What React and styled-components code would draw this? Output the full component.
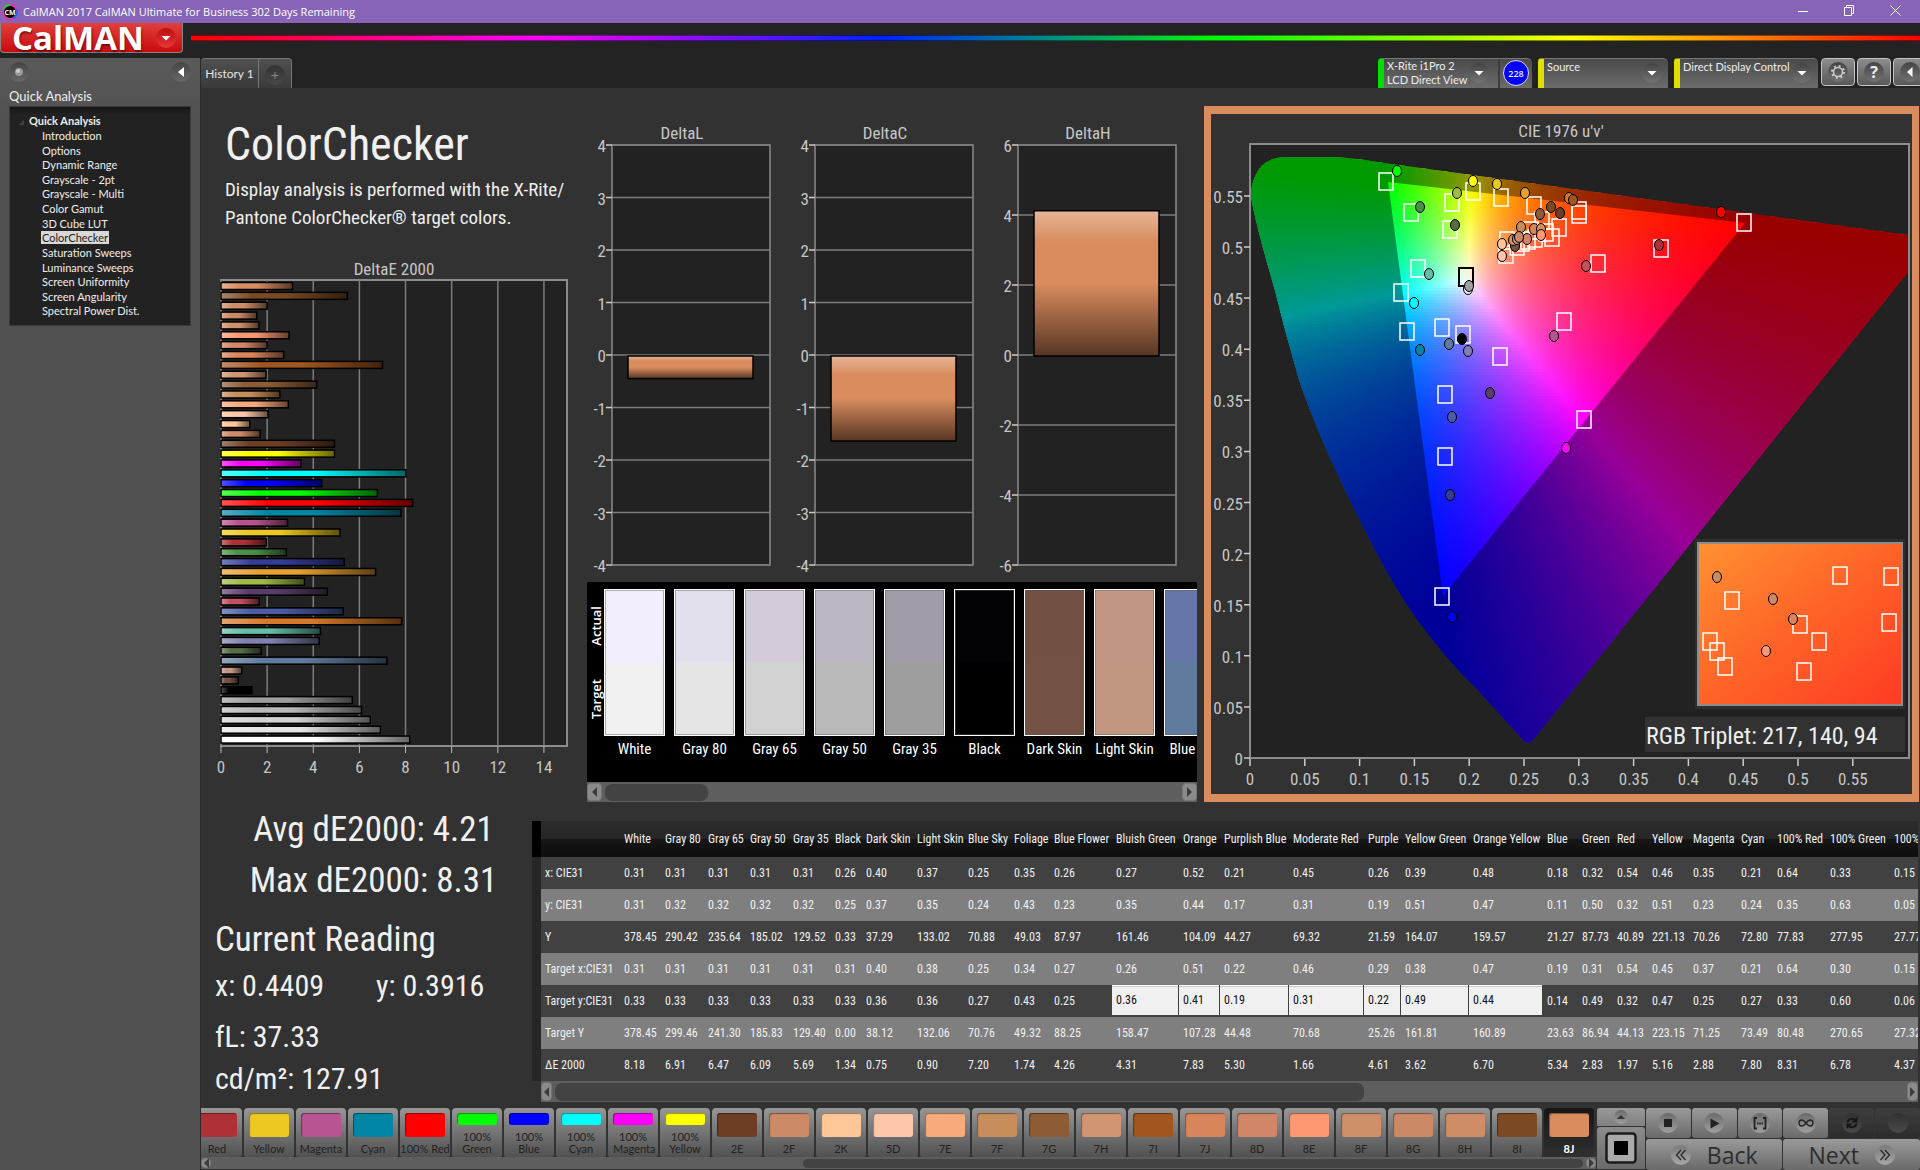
import React, { useState } from 'react'
import styled, { createGlobalStyle } from 'styled-components'

const GlobalStyle = createGlobalStyle`
    * {
        box-sizing: border-box;
    }
    body {
        margin: 0;
        background: #232323;
        color: #eee;
        font-family: Lato, "Open Sans", sans-serif;
    }
    button, select {
        font: inherit;
        color: inherit;
        border: 0;
        padding: 0;
        cursor: pointer;
    }
    h1, h2, p, ul {
        margin: 0;
        padding: 0;
        font-weight: normal;
    }
`;

const narrow = '"Roboto Condensed", "Liberation Sans Narrow", sans-serif'

/* ---------- data ---------- */

const pages = ['Introduction', 'Options', 'Dynamic Range', 'Grayscale - 2pt', 'Grayscale - Multi', 'Color Gamut', '3D Cube LUT', 'ColorChecker', 'Saturation Sweeps', 'Luminance Sweeps', 'Screen Uniformity', 'Screen Angularity', 'Spectral Power Dist.']

const deltaE = [
    [3.1, '#d98c5e'], [5.48, '#7b4a23'], [2, '#ce8d67'], [1.55, '#cc8966'], [1.65, '#ce8f69'], [2.95, '#fd9872'],
    [2, '#d18767'], [2.72, '#d9855b'], [7, '#a2561f'], [1.95, '#d19671'], [4.15, '#8d5c34'], [2.55, '#c78d5b'],
    [2.92, '#f9aa7d'], [2.04, '#fec7a9'], [1.25, '#ffc797'], [1.7, '#cc8a66'], [4.92, '#6d3e25'], [4.92, '#ffff00'],
    [3.47, '#ff00ff'], [8.02, '#00ffff'], [4.37, '#0000ff'], [6.78, '#00ff00'], [8.31, '#ff0000'], [7.8, '#0187a5'],
    [2.88, '#b95492'], [5.16, '#ecc820'], [1.97, '#b03038'], [2.83, '#4a9148'], [5.34, '#343c96'], [6.7, '#e8a12c'],
    [3.62, '#a1bc45'], [4.61, '#5c3c6c'], [1.66, '#c3505f'], [5.3, '#4b5ba5'], [7.83, '#d77829'], [4.31, '#62bda9'],
    [4.26, '#8280b0'], [1.74, '#586c42'], [7.2, '#5f7b9d'], [0.9, '#c39681'], [0.75, '#735243'], [1.34, '#000000'],
    [5.69, '#9f9f9f'], [6.09, '#bababa'], [6.47, '#d3d3d3'], [6.91, '#e6e6e6'], [8.18, '#ffffff'],
]

const deltas = [
    { title: 'DeltaL', max: 4, step: 1, value: -0.43 },
    { title: 'DeltaC', max: 4, step: 1, value: -1.62 },
    { title: 'DeltaH', max: 6, step: 2, value: 4.15 },
]

const patches = [
    { name: 'White', actual: '#f2eefe', target: '#f0f0f0' },
    { name: 'Gray 80', actual: '#e3e0ed', target: '#e5e5e5' },
    { name: 'Gray 65', actual: '#d3ccd8', target: '#d2d2d2' },
    { name: 'Gray 50', actual: '#bdb7c3', target: '#b9b9b9' },
    { name: 'Gray 35', actual: '#a29ba8', target: '#9e9e9e' },
    { name: 'Black', actual: '#030305', target: '#000000' },
    { name: 'Dark Skin', actual: '#725142', target: '#735243' },
    { name: 'Light Skin', actual: '#c29682', target: '#c39681' },
    { name: 'Blue Sky', actual: '#6776a8', target: '#5f7b9d' },
]

const columns = [
    ['White', 41, '0.31 0.31 378.45 0.31 0.33 378.45 8.18'],
    ['Gray 80', 43, '0.31 0.32 290.42 0.31 0.33 299.46 6.91'],
    ['Gray 65', 42, '0.31 0.32 235.64 0.31 0.33 241.30 6.47'],
    ['Gray 50', 43, '0.31 0.32 185.02 0.31 0.33 185.83 6.09'],
    ['Gray 35', 42, '0.31 0.32 129.52 0.31 0.33 129.40 5.69'],
    ['Black', 31, '0.26 0.25 0.33 0.31 0.33 0.00 1.34'],
    ['Dark Skin', 51, '0.40 0.37 37.29 0.40 0.36 38.12 0.75'],
    ['Light Skin', 51, '0.37 0.35 133.02 0.38 0.36 132.06 0.90'],
    ['Blue Sky', 46, '0.25 0.24 70.88 0.25 0.27 70.76 7.20'],
    ['Foliage', 40, '0.35 0.43 49.03 0.34 0.43 49.32 1.74'],
    ['Blue Flower', 62, '0.26 0.23 87.97 0.27 0.25 88.25 4.26'],
    ['Bluish Green', 67, '0.27 0.35 161.46 0.26 0.36 158.47 4.31', true],
    ['Orange', 41, '0.52 0.44 104.09 0.51 0.41 107.28 7.83', true],
    ['Purplish Blue', 69, '0.21 0.17 44.27 0.22 0.19 44.48 5.30', true],
    ['Moderate Red', 75, '0.45 0.31 69.32 0.46 0.31 70.68 1.66', true],
    ['Purple', 37, '0.26 0.19 21.59 0.29 0.22 25.26 4.61', true],
    ['Yellow Green', 68, '0.39 0.51 164.07 0.38 0.49 161.81 3.62', true],
    ['Orange Yellow', 74, '0.48 0.47 159.57 0.47 0.44 160.89 6.70', true],
    ['Blue', 35, '0.18 0.11 21.27 0.19 0.14 23.63 5.34'],
    ['Green', 35, '0.32 0.50 87.73 0.31 0.49 86.94 2.83'],
    ['Red', 35, '0.54 0.32 40.89 0.54 0.32 44.13 1.97'],
    ['Yellow', 41, '0.46 0.51 221.13 0.45 0.47 223.15 5.16'],
    ['Magenta', 48, '0.35 0.23 70.26 0.37 0.25 71.25 2.88'],
    ['Cyan', 36, '0.21 0.24 72.80 0.21 0.27 73.49 7.80'],
    ['100% Red', 53, '0.64 0.35 77.83 0.64 0.33 80.48 8.31'],
    ['100% Green', 64, '0.33 0.63 277.95 0.30 0.60 270.65 6.78'],
    ['100% Blue', 60, '0.15 0.05 27.77 0.15 0.06 27.32 4.37'],
].map(([name, width, values, selected]) => ({ name, width, values: values.split(' '), selected }))

const rowNames = ['x: CIE31', 'y: CIE31', 'Y', 'Target x:CIE31', 'Target y:CIE31', 'Target Y', 'ΔE 2000']

const chips = [
    ['Red', '#b03038'], ['Yellow', '#ecc820'], ['Magenta', '#b95492'], ['Cyan', '#0187a5'], ['100% Red', '#ff0000'],
    ['100% Green', '#00ff00'], ['100% Blue', '#0000ff'], ['100% Cyan', '#00ffff'], ['100% Magenta', '#ff00ff'], ['100% Yellow', '#ffff00'],
    ['2E', '#6d3e25'], ['2F', '#cc8a66'], ['2K', '#ffc797'], ['5D', '#fec7a9'], ['7E', '#f9aa7d'], ['7F', '#c78d5b'],
    ['7G', '#8d5c34'], ['7H', '#d19671'], ['7I', '#a2561f'], ['7J', '#d9855b'], ['8D', '#d18767'], ['8E', '#fd9872'],
    ['8F', '#ce8f69'], ['8G', '#cc8966'], ['8H', '#ce8d67'], ['8I', '#7b4a23'], ['8J', '#d98c5e'],
]

const targets = [
    [136, 37], [161, 68], [202, 58], [223, 47], [251, 53], [284, 61], [329, 66], [329, 70], [494, 78], [411, 104],
    [348, 119], [200, 85], [168, 124], [151, 148], [157, 187], [192, 183], [213, 190], [250, 212], [314, 177],
    [195, 250], [334, 275], [195, 312], [192, 452], [292, 76], [309, 83], [302, 93], [257, 96], [256, 110],
    [267, 102], [278, 96], [285, 94], [272, 98], [281, 86], [296, 88],
]

const readings = [
    [147, 27, '#00ff00'], [223, 37, '#ffff00'], [247, 40, '#ecc820'], [207, 49, '#a1bc45'], [275, 49, '#e8a12c'],
    [170, 63, '#4a9148'], [319, 54, '#d77829'], [323, 56, '#a2561f'], [301, 63, '#7b4a23'], [290, 70, '#8d5c34'],
    [310, 69, '#6d3e25'], [471, 68, '#ff0000'], [409, 101, '#b03038'], [336, 122, '#c3505f'], [205, 81, '#586c42'],
    [179, 130, '#62bda9'], [164, 159, '#00ffff'], [212, 195, '#000000'],
    [199, 200, '#5f7b9d'], [170, 206, '#0187a5'], [218, 207, '#8280b0'], [304, 192, '#b95492'], [240, 249, '#5c3c6c'],
    [202, 273, '#4b5ba5'], [316, 304, '#ff00ff'], [200, 351, '#343c96'], [202, 473, '#0000ff'], [271, 83, '#c78d5b'],
    [284, 85, '#d9855b'], [291, 85, '#d98c5e'], [291, 91, '#fd9872'], [277, 95, '#d18767'], [265, 102, '#735243'],
    [263, 96, '#ce8f69'], [267, 95, '#c39681'], [269, 93, '#cc8966'], [252, 100, '#ffc797'], [252, 112, '#fec7a9'],
]

const zoomTargets = [[142, 32], [193, 33], [34, 57], [191, 79], [102, 81], [121, 98], [12, 98], [19, 108], [27, 123], [106, 128]]
const zoomReadings = [[19, 34, '#c78d5b'], [75, 56, '#cc8966'], [95, 76, '#d9855b'], [68, 108, '#fd9872']]

/* ---------- window frame ---------- */

const Window = styled.div`
    display: flex;
    flex-direction: column;
    min-height: 100vh;
    overflow: hidden;
`;

const TitleBar = styled.header`
    display: flex;
    align-items: center;
    height: 23px;
    padding: 0 13px 0 2px;
    background: #8764b8;
    color: #fff;
    font: 11px/19px "Open Sans", sans-serif;
    svg {
        margin-right: 5px;
    }
    nav {
        display: flex;
        margin: 0 0 3px auto;
        button {
            width: 46px;
            background: none;
        }
        svg {
            display: block;
            margin: 0 auto;
        }
        button:last-child {
            width: 24px;
            margin-left: 11px;
        }
    }
`;

const Brand = styled.div`
    display: flex;
    height: 35px;
    gap: 8px;
    i {
        flex: 1;
        height: 6px;
        margin-top: 12px;
        border: 1px solid rgba(0, 0, 0, 0.45);
        border-width: 1px 0;
        background: linear-gradient(90deg, red, magenta, #0020ff, lime, yellow, red);
    }
`;

const Logo = styled.button`
    display: flex;
    align-items: center;
    width: 183px;
    height: 30px;
    padding-left: 11px;
    border: 1px solid #8a8484;
    border-top: 0;
    border-radius: 0 0 4px 4px;
    background: linear-gradient(#e0403d, #c90a0d);
    color: #fff;
    font: bold 33px/28px "Open Sans", sans-serif;
    text-shadow: 1px 2px 2px rgba(60, 0, 0, 0.6);
    svg {
        margin: 0 6px 0 auto;
    }
`;

const Shell = styled.div`
    display: flex;
    flex: 1;
`;

const Sidebar = styled.aside`
    flex: none;
    width: 201px;
    padding: 4px 9px 0;
    border-right: 1px solid #2a2a2a;
    background: linear-gradient(#5a5a5a, #515151 60px);
    h2 {
        margin: 4px 0 0;
        font-size: 13px;
        line-height: 20px;
    }
`;

const SidebarTop = styled.div`
    display: flex;
    justify-content: space-between;
`;

const RoundButton = styled.button`
    display: flex;
    align-items: center;
    justify-content: center;
    width: 20px;
    height: 20px;
    border-radius: 50%;
    background: linear-gradient(#444, #686868);
`;

const Tree = styled.div`
    height: 220px;
    padding: 6px 0 0 19px;
    border: 1px solid #3a3a3a;
    background: linear-gradient(#151515, #222 8px);
    font-size: 11px;
    strong {
        position: relative;
        display: block;
        line-height: 16px;
    }
    strong::before {
        content: '';
        position: absolute;
        left: -10px;
        top: 7px;
        border-left: 5px solid transparent;
        border-bottom: 5px solid #444;
    }
    ul {
        display: grid;
        height: 190px;
        padding-left: 12px;
        list-style: none;
    }
    a {
        padding: 0 1px;
        color: inherit;
        text-decoration: none;
    }
    a[aria-current] {
        background: #d8d8d8;
        color: #222;
    }
`;

const Main = styled.main`
    display: flex;
    flex: 1;
    flex-direction: column;
    min-width: 0;
    background: #323232;
`;

const TabBar = styled.div`
    display: flex;
    height: 30px;
    overflow: hidden;
    background: #232323;
    font-size: 12px;
`;

const Tab = styled.button`
    width: ${({ $width }) => $width}px;
    border: 1px solid #777;
    border-width: 1px 1px 0 0;
    border-radius: ${({ $radius }) => $radius};
    background: linear-gradient(#505050, #3a3a3a);
    color: #e4e4e4;
    svg {
        display: block;
        margin: 2px auto 0;
    }
`;

const Devices = styled.div`
    display: flex;
    flex: none;
    gap: 6px;
    margin: 0 -7px 0 auto;
    font-size: 11px;
    line-height: 14px;
`;

const Device = styled.div`
    position: relative;
    display: flex;
    width: ${({ $width }) => $width}px;
    border-top: 1px solid #777;
    border-left: 6px solid ${({ $led }) => $led};
    border-radius: 4px 5px 0 0;
    background: linear-gradient(#4a4a4a, #6c6c6c);
    select {
        width: 100%;
        padding: 0 24px 14px 3px;
        background: none;
        appearance: none;
        line-height: 14px;
    }
    > svg {
        position: absolute;
        right: 6px;
        top: 4px;
        pointer-events: none;
    }
`;

const MeterButton = styled.button`
    display: flex;
    align-items: center;
    justify-content: space-between;
    width: 116px;
    padding: 0 9px 1px 3px;
    border-right: 2px solid #3c3c3c;
    background: none;
    text-align: left;
    white-space: nowrap;
    span {
        flex: 1;
    }
    svg {
        margin-left: -4px;
        flex: none;
    }
`;

const Badge = styled.span`
    display: flex;
    align-items: center;
    justify-content: center;
    width: 26px;
    height: 26px;
    margin: 1px auto;
    border: 1px solid #dde;
    border-radius: 50%;
    background: #0000ff;
    font: 600 9px "Open Sans", sans-serif;
`;

const Tools = styled.div`
    display: flex;
    gap: 2px;
    margin-left: -3px;
    button {
        width: 34px;
        height: 28px;
        border: 1px solid #c4c4c4;
        border-radius: 4px;
        background: linear-gradient(#8c8c8c, #585858);
    }
    svg {
        display: block;
        margin: auto;
    }
`;

/* ---------- workspace ---------- */

const Upper = styled.section`
    display: grid;
    grid-template-columns: 386px 610px minmax(0, 1fr);
    padding-right: 1px;
    font-family: ${narrow};
`;

const Intro = styled.div`
    h1 {
        padding: 29px 0 0 24px;
        font-size: 46px;
        line-height: 54px;
        color: #f0f0f0;
    }
    p {
        padding: 5px 0 18px 24px;
        font-size: 19px;
        line-height: 28px;
        white-space: nowrap;
    }
`;

const Middle = styled.div`
    display: flex;
    flex-direction: column;
    padding-top: 27px;
`;

const DeltaRow = styled.div`
    display: grid;
    grid-template-columns: repeat(3, 203px);
`;

const Chart = styled.svg`
    display: block;
    width: 100%;
    height: auto;
    text {
        fill: #c6c6c6;
        font: 17px ${narrow};
    }
`;

const Swatches = styled.div`
    display: flex;
    height: 200px;
    overflow: hidden;
    background: #000;
    padding-top: 7px;
`;

const SideLabels = styled.div`
    display: flex;
    flex: none;
    flex-direction: column;
    justify-content: space-around;
    align-items: center;
    width: 17px;
    height: 147px;
    font: 600 13px "Open Sans", sans-serif;
    color: #fff;
    span {
        writing-mode: vertical-rl;
        transform: rotate(180deg);
    }
`;

const Patch = styled.figure`
    flex: none;
    width: 61px;
    margin: 0 9px 0 0;
    div {
        height: 147px;
        border: 1px solid #fff;
        box-shadow: inset 0 0 0 1px rgba(90, 90, 90, 0.45);
        background: linear-gradient(${({ $actual, $target }) => `${$actual} 50%, ${$target} 50%`});
    }
    figcaption {
        font-size: 15px;
        line-height: 26px;
        text-align: center;
        white-space: nowrap;
        color: #fff;
    }
`;

const Track = styled.div`
    display: flex;
    align-items: center;
    height: ${({ $height }) => $height}px;
    background: #5e5e5e;
    button {
        display: flex;
        flex: none;
        align-items: center;
        justify-content: center;
        width: ${({ $arrow }) => $arrow}px;
        height: calc(100% - 2px);
        border: 1px solid #777;
        border-radius: 4px;
        background: #8a8a8a;
    }
    > div {
        flex: 1;
        height: calc(100% - 3px);
        margin: 0 3px;
    }
`;

const Thumb = styled.i`
    display: block;
    height: 100%;
    border-radius: 7px;
    background: #434343;
`;

const CieFrame = styled.div`
    align-self: start;
    margin: 18px 0 0 7px;
    padding: 8px 7px;
    background: #d98c5e;
    svg {
        background: #323232;
    }
`;

const Lower = styled.section`
    display: flex;
    padding: 0 2px 6px 0;
    font-family: ${narrow};
`;

const Summary = styled.div`
    flex: none;
    width: 331px;
    padding: 2px 0 0 14px;
    color: #f0f0f0;
    font-size: 30px;
    line-height: 42px;
    white-space: nowrap;
    p:first-child, p:nth-child(2) {
        font-size: 35px;
        line-height: 51px;
        text-align: center;
    }
    h2 {
        padding-top: 8px;
        font-size: 35px;
        line-height: 51px;
    }
    span {
        display: inline-block;
        width: 161px;
    }
    h2 + p {
        padding-bottom: 9px;
    }
`;

const TableArea = styled.div`
    flex: 1;
    min-width: 0;
    padding-top: 19px;
    > div:last-child {
        margin-left: 9px;
    }
`;

const TableClip = styled.div`
    overflow: hidden;
    padding-left: 9px;
    background: linear-gradient(#000 36px, #262626 36px);
`;

const Table = styled.table`
    table-layout: fixed;
    width: 1px;
    border-spacing: 0;
    font: 12px ${narrow};
    color: #f0f0f0;
    th, td {
        height: 32px;
        padding: 0 0 0 4px;
        font-weight: normal;
        text-align: left;
        white-space: nowrap;
    }
    thead th {
        height: 36px;
        background: linear-gradient(#2c2c2c, #262626 50%, #161616 50%, #0e0e0e);
    }
    tbody tr {
        background: #414141;
    }
    tbody tr:nth-child(even) {
        background: #7f7f7f;
    }
    td.selected {
        border-right: 1px solid #414141;
        border-bottom: 2px solid #414141;
        background: #f0f0f0;
        box-shadow: inset 0 1px 0 #fff, inset 0 2px 0 #ccc;
        color: #111;
    }
`;

/* ---------- footer ---------- */

const Footer = styled.footer`
    display: flex;
    gap: 1px;
    height: 62px;
`;

const ChipPanel = styled.div`
    flex: 1;
    min-width: 0;
    padding-bottom: 1px;
`;

const ChipRow = styled.div`
    display: flex;
    gap: 2px;
    justify-content: flex-end;
    height: 49px;
    padding-right: 2px;
    overflow: hidden;
`;

const Chip = styled.button`
    display: flex;
    flex: none;
    flex-direction: column;
    align-items: center;
    justify-content: space-between;
    width: 50px;
    padding: 5px 0 2px;
    border: 0;
    border-radius: 4px 4px 2px 2px;
    background: ${({ $active }) => $active ? 'linear-gradient(#161616, #303030)' : 'linear-gradient(#969696, #515151)'};
    color: ${({ $active }) => $active ? '#fff' : '#222'};
    font-weight: ${({ $active }) => $active ? 'bold' : 'normal'};
    font-size: 11px;
    line-height: 12px;
    &::before {
        content: '';
        flex: none;
        width: 40px;
        height: ${({ $small }) => $small ? 12 : 24}px;
        border-radius: 3px;
        background: ${({ $color }) => $color};
        box-shadow: inset 1px 1px 1px rgba(0, 0, 0, 0.4);
    }
    span {
        width: ${({ $small }) => $small ? 40 : 50}px;
        white-space: ${({ $small }) => $small ? 'normal' : 'nowrap'};
    }
`;

const PatternColumn = styled.div`
    display: flex;
    flex: none;
    flex-direction: column;
    gap: 1px;
    width: 48px;
    button {
        display: flex;
        align-items: center;
        justify-content: center;
        height: 18px;
        border-radius: 3px 3px 0 0;
        background: linear-gradient(#999, #808080);
    }
    button:last-child {
        height: 42px;
        background: linear-gradient(#8c8c8c, #6a6a6a);
    }
`;

const Transport = styled.div`
    display: grid;
    flex: none;
    grid-template-columns: repeat(6, 1fr);
    grid-template-rows: 30px 31px;
    gap: 1px;
    width: 274px;
`;

const TransportButton = styled.button`
    display: flex;
    align-items: center;
    justify-content: center;
    grid-column: span ${({ $wide }) => $wide ? 3 : 1};
    gap: 16px;
    border-radius: 3px;
    background: ${({ disabled }) => disabled ? 'linear-gradient(#3e3e3e, #2c2c2c)' : 'linear-gradient(#9a9a9a, #6a6a6a)'};
    color: #2e2e2e;
    font: 500 23px/28px "Open Sans", sans-serif;
`;

/* ---------- small drawings ---------- */

function AppIcon() {
    return (
        <svg width="16" height="16" viewBox="0 0 16 16">
            <circle cx="8" cy="8" r="7" fill="#000" stroke="#e03a9a" strokeWidth="2" />
            <path d="M8 1a7 7 0 0 0-6.500 4.500" fill="none" stroke="#28c840" strokeWidth="2" />
            <path d="M14.500 5.500A7 7 0 0 1 11 14.300" fill="none" stroke="#3060ff" strokeWidth="2" />
            <text x="8" y="11" textAnchor="middle" fill="#fff" fontSize="7" fontWeight="bold" fontFamily="Open Sans">CM</text>
        </svg>
    )
}

function Disc({ size = 20, from = '#444', to = '#737373', children }) {
    const id = `disc${from.slice(1)}${to.slice(1)}`
    return (
        <svg width={size} height={size} viewBox="0 0 20 20">
            <linearGradient id={id} x2="0" y2="1">
                <stop stopColor={from} />
                <stop offset="1" stopColor={to} />
            </linearGradient>
            <circle cx="10" cy="10" r="10" fill={`url(#${id})`} />
            {children}
        </svg>
    )
}

const DownArrow = () => <path d="M5.500 8h9L10 12.500z" fill="#fff" />

function ScrollBar({ height, arrow = 14, start, size }) {
    return (
        <Track $height={height} $arrow={arrow}>
            <button aria-label="Scroll left"><svg width="5" height="10"><path d="M5 0v10L0 5z" fill="#3c3c3c" /></svg></button>
            <div><Thumb style={{ marginLeft: `${start}%`, width: `${size}%` }} /></div>
            <button aria-label="Scroll right"><svg width="5" height="10"><path d="M0 0v10l5-5z" fill="#3c3c3c" /></svg></button>
        </Track>
    )
}

/* ---------- charts ---------- */

function shade(color) {
    const n = parseInt(color.slice(1), 16)
    const rgb = [n >> 16, (n >> 8) & 255, n & 255]
    return {
        light: `rgb(${rgb.map(c => Math.round(c + (255 - c) * 0.33))})`,
        dark: `rgb(${rgb.map(c => Math.round(c * 0.4))})`,
    }
}

function DeltaEChart() {
    const left = 20, top = 30, width = 346, height = 466
    const x = value => left + value * width / 15
    return (
        <Chart viewBox="0 0 386 532">
            <defs>
                {deltaE.map(([, color], i) => (
                    <linearGradient key={i} id={`bar${i}`}>
                        <stop stopColor={shade(color).light} />
                        <stop offset="0.25" stopColor={color} />
                        <stop offset="0.5" stopColor={color} />
                        <stop offset="1" stopColor={shade(color).dark} />
                    </linearGradient>
                ))}
            </defs>
            <text x="193" y="25" textAnchor="middle">DeltaE 2000</text>
            <rect x={left} y={top} width={width} height={height} fill="#222" stroke="#8c8c8c" strokeWidth="2" />
            {[0, 2, 4, 6, 8, 10, 12, 14].map(n => (
                <g key={n}>
                    <path d={`M${x(n)} ${top}V${top + height}`} stroke="#7c7c7c" strokeWidth="1.500" />
                    <path d={`M${x(n)} ${top + height}v7`} stroke="#bbb" />
                    <text x={x(n)} y="523" textAnchor="middle">{n}</text>
                </g>
            ))}
            {deltaE.map(([value, color], i) => (
                <rect key={i} x={left} y={top + 2.5 + i * 9.86} width={value * width / 15} height="7" fill={`url(#bar${i})`} stroke="#000" strokeWidth="1.500" />
            ))}
        </Chart>
    )
}

function DeltaChart({ title, max, step, value }) {
    const left = 25, top = 30, width = 158, height = 420
    const y = n => top + (max - n) * height / (max * 2)
    const ticks = []
    for (let n = max; n >= -max; n -= step) ticks.push(n)
    return (
        <Chart viewBox="0 0 203 467">
            <linearGradient id="copper" x2="0" y2="1">
                <stop stopColor="#e6b598" />
                <stop offset="0.22" stopColor="#d98c5e" />
                <stop offset="0.5" stopColor="#d98c5e" />
                <stop offset="1" stopColor="#573624" />
            </linearGradient>
            <text x="95" y="24" textAnchor="middle">{title}</text>
            <rect x={left} y={top} width={width} height={height} fill="#222" stroke="#8c8c8c" strokeWidth="1.500" />
            {ticks.map(n => (
                <g key={n}>
                    <path d={`M${left} ${y(n)}h${width}`} stroke="#7c7c7c" strokeWidth="1.500" />
                    <path d={`M${left - 6} ${y(n)}h6`} stroke="#ccc" strokeWidth="1.500" />
                    <text x={left - 6} y={y(n) + 7} textAnchor="end">{n}</text>
                </g>
            ))}
            <rect x="41" y={Math.min(y(0), y(value)) + 1} width="125" height={Math.abs(y(value) - y(0))} fill="url(#copper)" stroke="#000" strokeWidth="1.500" />
        </Chart>
    )
}

const plotWidth = 659
const plotHeight = 614

// full brightness linear rgb for a u'v' position
function chromaColor(px, py) {
    const u = px / 1096
    const v = (plotHeight - py) / 1022
    const X = 9 * u / (4 * v)
    const Z = (12 - 3 * u - 20 * v) / (4 * v)
    const rgb = [
        3.2406 * X - 1.5372 - 0.4986 * Z,
        -0.9689 * X + 1.8758 + 0.0415 * Z,
        0.0557 * X - 0.204 + 1.057 * Z,
    ].map(c => Math.max(c, 0))
    const top = Math.max(...rgb)
    return `rgb(${rgb.map(c => Math.round(255 * c / top))})`
}

const chromaRows = []
for (let y = 12; y < 600; y += 3) {
    const stops = []
    for (let x = 0; x <= 660; x += 10) stops.push(chromaColor(x, y + 1))
    chromaRows.push({ y, stops })
}

const locus = 'M1 53 Q1 44 3 38 C7 25 14 14 35 13 L88 13 Q110 15 134 19 L658 91 V128 L283 596 Q278 601 274 597 L226 544 Q200 520 166 474 Q145 444 125 406 Q95 348 72 296 Q58 262 49 236 L35 186 L24 143 Q6 82 1 53Z'
const triangle = 'M138 38L495 79L193 452Z'

function Markers({ squares, dots }) {
    return (
        <g>
            {squares.map(([x, y], i) => <rect key={i} x={x - 7} y={y - 8} width="14" height="17" fill="none" stroke="#fff" strokeWidth="1.500" />)}
            {dots.map(([x, y, color], i) => <ellipse key={i} cx={x} cy={y} rx="4.500" ry="5.500" fill={color} stroke="#000" />)}
        </g>
    )
}

function CieChart() {
    const ticks = Array.from({ length: 12 }, (_, i) => i)
    return (
        <Chart viewBox="0 0 701 680">
            <defs>
                <clipPath id="locus"><path d={locus} /></clipPath>
                <linearGradient id="closeup" x2="1" y2="1">
                    <stop stopColor="#ff9132" />
                    <stop offset="0.5" stopColor="#ff6327" />
                    <stop offset="1" stopColor="#ff3a24" />
                </linearGradient>
                {chromaRows.map(({ y, stops }) => (
                    <linearGradient key={y} id={`row${y}`}>
                        {stops.map((color, i) => <stop key={i} offset={i / 66} stopColor={color} />)}
                    </linearGradient>
                ))}
            </defs>
            <text x="350" y="23" textAnchor="middle">CIE 1976 u'v'</text>
            <g transform="translate(39 30)">
                <rect width={plotWidth} height={plotHeight} fill="#222" />
                <g clipPath="url(#locus)">
                    {chromaRows.map(({ y }) => <rect key={y} y={y} width="660" height="4" fill={`url(#row${y})`} />)}
                    <path d={`M0 0H660V614H0Z${triangle}`} fillRule="evenodd" fillOpacity="0.4" />
                </g>
                <rect width={plotWidth} height={plotHeight} fill="none" stroke="#8c8c8c" strokeWidth="2" />
                {ticks.map(i => (
                    <g key={i} stroke="#ccc" strokeWidth="1.500">
                        <path d={`M0 ${614 - i * 51.1}h-6M${i * 54.8} 615v7`} />
                        <text x="-7" y={621 - i * 51.1} textAnchor="end" stroke="none">{i * 5 / 100}</text>
                        <text x={i * 54.8} y="641" textAnchor="middle" stroke="none">{i * 5 / 100}</text>
                    </g>
                ))}
                <Markers squares={targets} dots={readings} />
                <rect x="209" y="124" width="14" height="18" fill="none" stroke="#000" strokeWidth="2" />
                <ellipse cx="218" cy="145" rx="4.500" ry="5.500" fill="#eee" stroke="#000" />
                <ellipse cx="219" cy="142" rx="4.500" ry="5.500" fill="#9f9f9f" stroke="#000" />
                <rect x="445" y="395" width="210" height="170" fill="#2e2e2e" />
                <g transform="translate(448 399)">
                    <rect width="204" height="162" fill="url(#closeup)" stroke="#8c8c8c" strokeWidth="2" />
                    <Markers squares={zoomTargets} dots={zoomReadings} />
                </g>
                <rect x="395" y="573" width="260" height="35" fill="#323232" />
                <text x="396" y="600" style={{ fontSize: 24, fill: '#eee' }}>RGB Triplet: 217, 140, 94</text>
            </g>
        </Chart>
    )
}

function ReadingsTable() {
    return (
        <Table>
            <colgroup>
                <col style={{ width: 79 }} />
                {columns.map(col => <col key={col.name} style={{ width: col.width }} />)}
            </colgroup>
            <thead>
                <tr>
                    <th></th>
                    {columns.map(col => <th key={col.name} scope="col">{col.name}</th>)}
                </tr>
            </thead>
            <tbody>
                {rowNames.map((name, row) => (
                    <tr key={name}>
                        <th scope="row">{name}</th>
                        {columns.map(col => (
                            <td key={col.name} className={col.selected && row === 4 ? 'selected' : undefined}>{col.values[row]}</td>
                        ))}
                    </tr>
                ))}
            </tbody>
        </Table>
    )
}

function App() {
    const [page, setPage] = useState('ColorChecker')
    const [chip, setChip] = useState('8J26')

    return (
        <Window>
            <GlobalStyle />
            <TitleBar>
                <AppIcon />
                CalMAN 2017 CalMAN Ultimate for Business 302 Days Remaining
                <nav>
                    <button aria-label="Minimize"><svg width="11" height="11"><path d="M0 6.500h10" stroke="#fff" /></svg></button>
                    <button aria-label="Restore"><svg width="11" height="11" fill="none" stroke="#fff"><path d="M.5 2.500h7v8h-7zM2.500 2.500v-2h7v8h-2" /></svg></button>
                    <button aria-label="Close"><svg width="11" height="11"><path d="M.5.5l10 10M10.500.5l-10 10" stroke="#fff" /></svg></button>
                </nav>
            </TitleBar>
            <Brand>
                <Logo>
                    CalMAN
                    <Disc from="#b80d10" to="#e8383a"><DownArrow /></Disc>
                </Logo>
                <i />
            </Brand>
            <Shell>
                <Sidebar>
                    <SidebarTop>
                        <RoundButton aria-label="Status"><svg width="8" height="8"><circle cx="4" cy="4" r="4" fill="#999" /><circle cx="3" cy="3" r="2" fill="#ccc" /></svg></RoundButton>
                        <RoundButton aria-label="Collapse"><svg width="6" height="10"><path d="M6 0v10L0 5z" fill="#fff" /></svg></RoundButton>
                    </SidebarTop>
                    <h2>Quick Analysis</h2>
                    <Tree>
                        <strong>Quick Analysis</strong>
                        <ul>
                            {pages.map(name => (
                                <li key={name}><a href="#" aria-current={name === page ? 'page' : undefined} onClick={() => setPage(name)}>{name}</a></li>
                            ))}
                        </ul>
                    </Tree>
                </Sidebar>
                <Main>
                    <TabBar>
                        <Tab $width={58} $radius="4px 0 0 0">History 1</Tab>
                        <Tab $width={33} $radius="0 4px 0 0" aria-label="Add history">
                            <Disc from="#333" to="#484848"><path d="M10 7v7M6.500 10.500h7" stroke="#888" /></Disc>
                        </Tab>
                        <Devices>
                            <Device $width={154} $led="#00e000">
                                <MeterButton>
                                    <span>X-Rite i1Pro 2<br />LCD Direct View</span>
                                    <Disc><DownArrow /></Disc>
                                </MeterButton>
                                <Badge>228</Badge>
                            </Device>
                            <Device $width={130} $led="#e0e000">
                                <select aria-label="Source"><option>Source</option></select>
                                <Disc><DownArrow /></Disc>
                            </Device>
                            <Device $width={144} $led="#e0e000">
                                <select aria-label="Display control"><option>Direct Display Control</option></select>
                                <Disc><DownArrow /></Disc>
                            </Device>
                            <Tools>
                                <button aria-label="Settings">
                                    <Disc>
                                        <circle cx="10" cy="10" r="4.500" fill="none" stroke="#ccc" strokeWidth="1.500" />
                                        <circle cx="10" cy="10" r="6" fill="none" stroke="#ccc" strokeWidth="2" strokeDasharray="2 2.700" />
                                    </Disc>
                                </button>
                                <button aria-label="Help">
                                    <Disc><text x="10" y="15.500" textAnchor="middle" fill="#eee" fontSize="16" fontWeight="bold" fontFamily="Open Sans">?</text></Disc>
                                </button>
                                <button aria-label="Hide"><Disc><path d="M12.500 5v10L7 10z" fill="#fff" /></Disc></button>
                            </Tools>
                        </Devices>
                    </TabBar>
                    <Upper>
                        <Intro>
                            <h1>ColorChecker</h1>
                            <p>Display analysis is performed with the X-Rite/<br />Pantone ColorChecker® target colors.</p>
                            <DeltaEChart />
                        </Intro>
                        <Middle>
                            <DeltaRow>
                                {deltas.map(item => <DeltaChart key={item.title} {...item} />)}
                            </DeltaRow>
                            <Swatches>
                                <SideLabels><span>Actual</span><span>Target</span></SideLabels>
                                {patches.map(({ name, actual, target }) => (
                                    <Patch key={name} $actual={actual} $target={target}>
                                        <div />
                                        <figcaption>{name}</figcaption>
                                    </Patch>
                                ))}
                            </Swatches>
                            <ScrollBar height={20} arrow={15} start={0} size={18} />
                        </Middle>
                        <CieFrame><CieChart /></CieFrame>
                    </Upper>
                    <Lower>
                        <Summary>
                            <p>Avg dE2000: 4.21</p>
                            <p>Max dE2000: 8.31</p>
                            <h2>Current Reading</h2>
                            <p><span>x: 0.4409</span>y: 0.3916</p>
                            <p>fL: 37.33</p>
                            <p>cd/m²: 127.91</p>
                        </Summary>
                        <TableArea>
                            <TableClip><ReadingsTable /></TableClip>
                            <ScrollBar height={21} arrow={11} start={0} size={60} />
                        </TableArea>
                    </Lower>
                    <Footer>
                        <ChipPanel>
                            <ChipRow>
                                {chips.map(([name, color], i) => {
                                    const id = name + i
                                    return (
                                        <Chip key={id} $color={color} $active={id === chip} $small={name.startsWith('100%') && name !== '100% Red'} onClick={() => setChip(id)}>
                                            <span>{name}</span>
                                        </Chip>
                                    )
                                })}
                            </ChipRow>
                            <ScrollBar height={12} arrow={10} start={43} size={57} />
                        </ChipPanel>
                        <PatternColumn>
                            <button aria-label="Expand patterns"><Disc size={14} from="#6a6a6a" to="#a0a0a0"><path d="M4 13l6-6 6 6z" fill="#333" /></Disc></button>
                            <button aria-label="Pattern window">
                                <svg width="32" height="32">
                                    <rect x="1.500" y="1.500" width="29" height="29" rx="3" fill="#aaa" stroke="#1c1c1c" strokeWidth="2.500" />
                                    <rect x="9" y="9" width="14" height="14" fill="#000" />
                                </svg>
                            </button>
                        </PatternColumn>
                        <Transport>
                            <TransportButton aria-label="Stop"><Disc from="#6a6a6a" to="#a0a0a0"><path d="M6 6h8v8H6z" fill="#222" /></Disc></TransportButton>
                            <TransportButton aria-label="Play"><Disc from="#6a6a6a" to="#a0a0a0"><path d="M6.500 5.500l9 5-9 5z" fill="#222" /></Disc></TransportButton>
                            <TransportButton aria-label="Read series">
                                <Disc from="#6a6a6a" to="#a0a0a0"><path d="M7 5H4.500v10.500H7M13 5h2.500v10.500H13M7 10.500h1.500m.8 0h1.500m.8 0H13" fill="none" stroke="#222" strokeWidth="1.800" /></Disc>
                            </TransportButton>
                            <TransportButton aria-label="Read continuously">
                                <Disc from="#6a6a6a" to="#a0a0a0"><path d="M10 10C8 7.500 7 7 6 7a3 3 0 0 0 0 6c1 0 2-.5 4-3s3-3 4-3a3 3 0 0 1 0 6c-1 0-2-.5-4-3z" fill="none" stroke="#222" strokeWidth="1.300" /></Disc>
                            </TransportButton>
                            <TransportButton aria-label="Refresh" disabled>
                                <Disc from="#303030" to="#4a4a4a"><path d="M5.500 9.500a4.500 4.500 0 0 1 8-2M14.500 10.500a4.500 4.500 0 0 1-8 2M14.500 4.500v4h-4M5.500 15.500v-4h4" fill="none" stroke="#161616" strokeWidth="2" /></Disc>
                            </TransportButton>
                            <TransportButton aria-label="Record" disabled><Disc from="#303030" to="#4a4a4a" /></TransportButton>
                            <TransportButton $wide>
                                <Disc from="#7a7a7a" to="#a8a8a8"><path d="M10 5l-4.500 5L10 15M14.500 5L10 10l4.500 5" fill="none" stroke="#2a2a2a" strokeWidth="1.300" /></Disc>
                                Back
                            </TransportButton>
                            <TransportButton $wide>
                                Next
                                <Disc from="#7a7a7a" to="#a8a8a8"><path d="M5.500 5l4.500 5-4.500 5M10 5l4.500 5-4.500 5" fill="none" stroke="#2a2a2a" strokeWidth="1.300" /></Disc>
                            </TransportButton>
                        </Transport>
                    </Footer>
                </Main>
            </Shell>
        </Window>
    )
}

export default App
